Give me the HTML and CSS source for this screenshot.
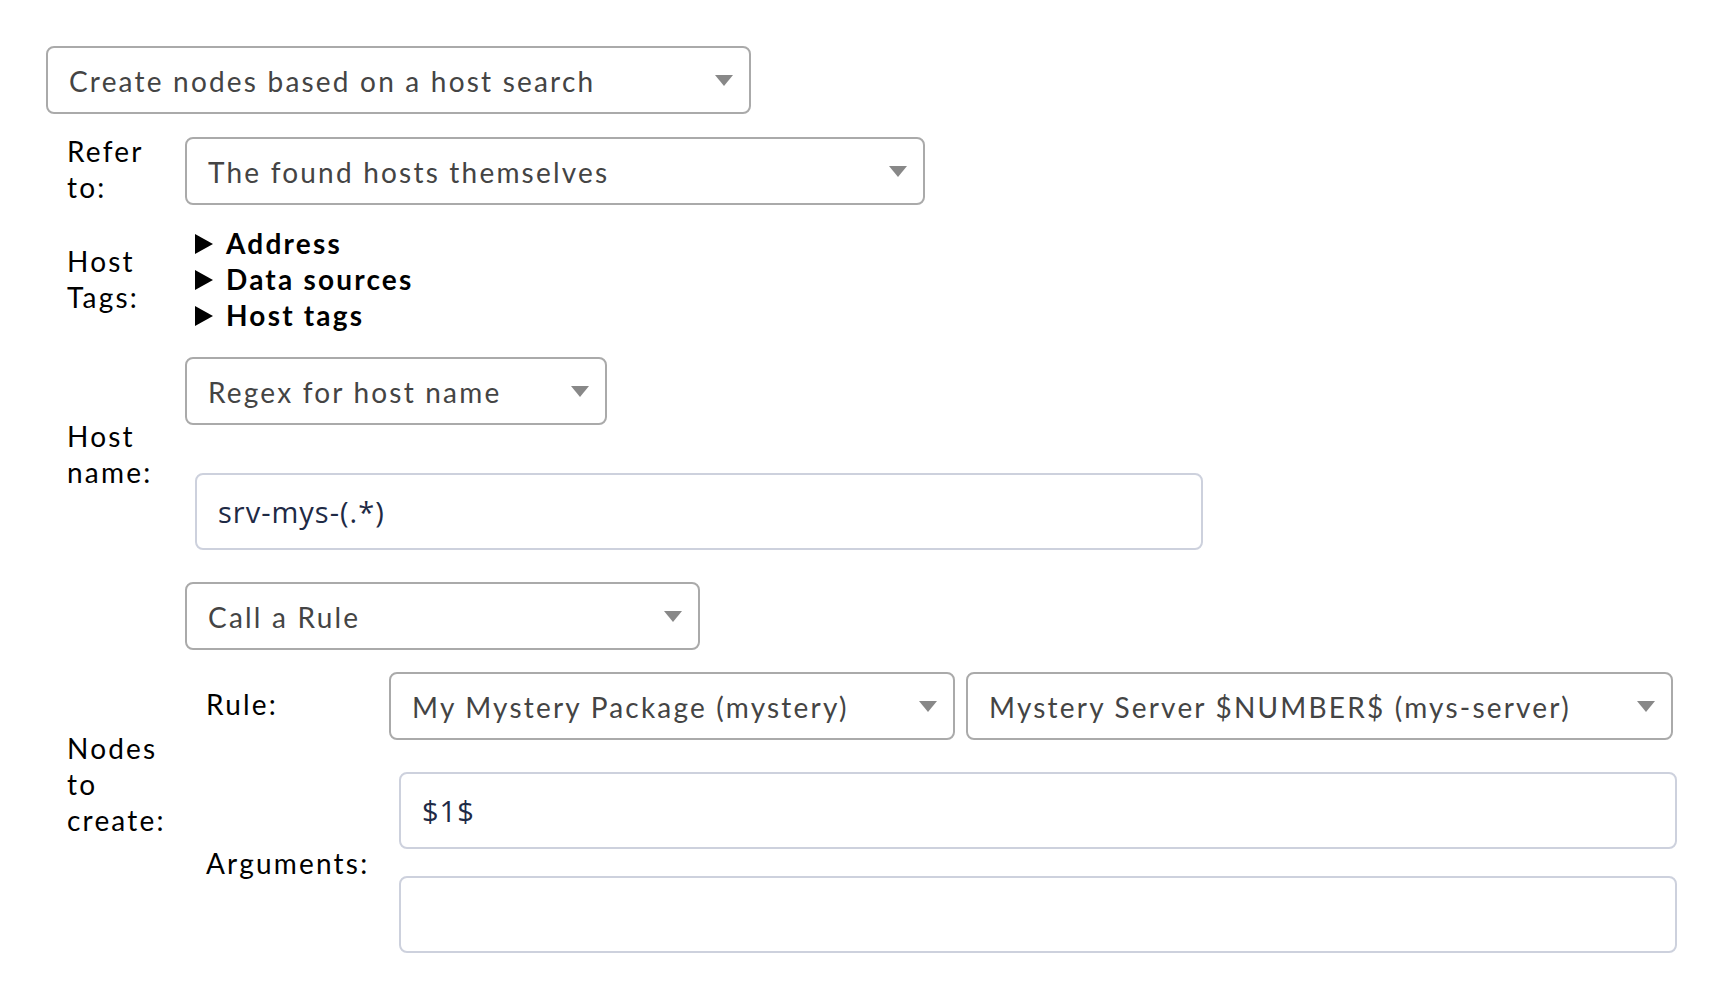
FILE: index.html
```html
<!DOCTYPE html>
<html>
<head>
<meta charset="utf-8">
<link rel="stylesheet" href="styles.css">
</head>
<body>
<div class="page">
  <div class="select w-top"><span class="select-text">Create nodes based on a host search</span><span class="arrow"></span></div>

  <div class="row r1">
    <div class="label up2">Refer<br>to:</div>
    <div class="value">
      <div class="select w-refer"><span class="select-text">The found hosts themselves</span><span class="arrow"></span></div>
    </div>
  </div>

  <div class="row r2">
    <div class="label">Host<br>Tags:</div>
    <div class="value">
      <ul class="taglist">
        <li class="tag"><span class="tri"></span>Address</li>
        <li class="tag"><span class="tri"></span>Data sources</li>
        <li class="tag"><span class="tri"></span>Host tags</li>
      </ul>
    </div>
  </div>

  <div class="row r3">
    <div class="label">Host<br>name:</div>
    <div class="value">
      <div class="select w-regex"><span class="select-text">Regex for host name</span><span class="arrow"></span></div>
      <div class="input w-host gap-48">srv-mys-(.*)</div>
    </div>
  </div>

  <div class="row r4">
    <div class="label nodes">Nodes<br>to<br>create:</div>
    <div class="value">
      <div class="select w-call"><span class="select-text">Call a Rule</span><span class="arrow"></span></div>
      <div class="subrow sr1">
        <div class="sublabel rule">Rule:</div>
        <div class="pair">
          <div class="select w-pack"><span class="select-text">My Mystery Package (mystery)</span><span class="arrow"></span></div>
          <div class="select w-server"><span class="select-text">Mystery Server $NUMBER$ (mys-server)</span><span class="arrow"></span></div>
        </div>
      </div>
      <div class="subrow sr2">
        <div class="sublabel">Arguments:</div>
        <div class="value">
          <div class="input w-arg">$1$</div>
          <div class="input w-arg gap-27"></div>
        </div>
      </div>
    </div>
  </div>
</div>
</body>
</html>
```

FILE: styles.css
```css
html, body {
  margin: 0;
  padding: 0;
  background: #ffffff;
}
body {
  font-family: Lato, "Open Sans", sans-serif;
  font-size: 28px;
  color: #000000;
  letter-spacing: 2.2px;
}
.page {
  padding: 46px 0 0 46px;
}
.select {
  box-sizing: border-box;
  height: 68px;
  border: 2px solid #aaaaaa;
  border-radius: 8px;
  display: flex;
  align-items: center;
  justify-content: space-between;
  padding: 2px 16px 0 21px;
  color: #444444;
  background: #ffffff;
}
.select-text {
  white-space: nowrap;
}
.arrow {
  width: 0;
  height: 0;
  border-left: 9px solid transparent;
  border-right: 9px solid transparent;
  border-top: 11px solid #888888;
  margin-top: -2px;
}
.w-top { width: 705px; }
.w-refer { width: 740px; }
.w-regex { width: 422px; }
.w-call { width: 515px; }
.w-pack { width: 566px; }
.w-server { width: 707px; }

.input {
  box-sizing: border-box;
  height: 77px;
  border: 2px solid #cdd1dd;
  border-radius: 8px;
  margin-left: 10px;
  display: flex;
  align-items: center;
  padding: 0 21px;
  color: #1e2a45;
  font-family: "Open Sans", sans-serif;
  font-size: 29px;
  letter-spacing: 1px;
}
.w-host { width: 1008px; }
.w-arg { width: 1278px; }
.gap-48 { margin-top: 48px; }
.gap-27 { margin-top: 27px; }

.row {
  display: flex;
  align-items: center;
}
.label {
  box-sizing: border-box;
  width: 139px;
  flex: none;
  padding: 0 21px;
  line-height: 36px;
  white-space: nowrap;
  margin: -20px 0;
}
.label.up2 {
  margin: -22px 0 -18px;
}
.label.nodes {
  margin: -4px 0 -36px;
}
.r1 { margin-top: 23px; }
.r2 { margin-top: 20px; }
.r3 { margin-top: 24px; }
.r4 { margin-top: 32px; }

.taglist {
  list-style: none;
  margin: 0;
  padding: 0 0 0 10px;
}
.tag {
  display: flex;
  align-items: center;
  height: 36px;
  font-weight: bold;
}
.tri {
  width: 0;
  height: 0;
  border-top: 10px solid transparent;
  border-bottom: 10px solid transparent;
  border-left: 18px solid #000000;
  margin-right: 13px;
  margin-top: 2px;
}

.subrow {
  display: flex;
  align-items: center;
}
.sr1 { margin-top: 22px; }
.sr2 { margin-top: 32px; }
.sublabel {
  box-sizing: border-box;
  width: 204px;
  flex: none;
  padding: 0 21px;
  line-height: 36px;
  white-space: nowrap;
}
.sublabel.rule {
  margin-top: -4px;
}
.pair {
  display: flex;
  gap: 11px;
}
```
